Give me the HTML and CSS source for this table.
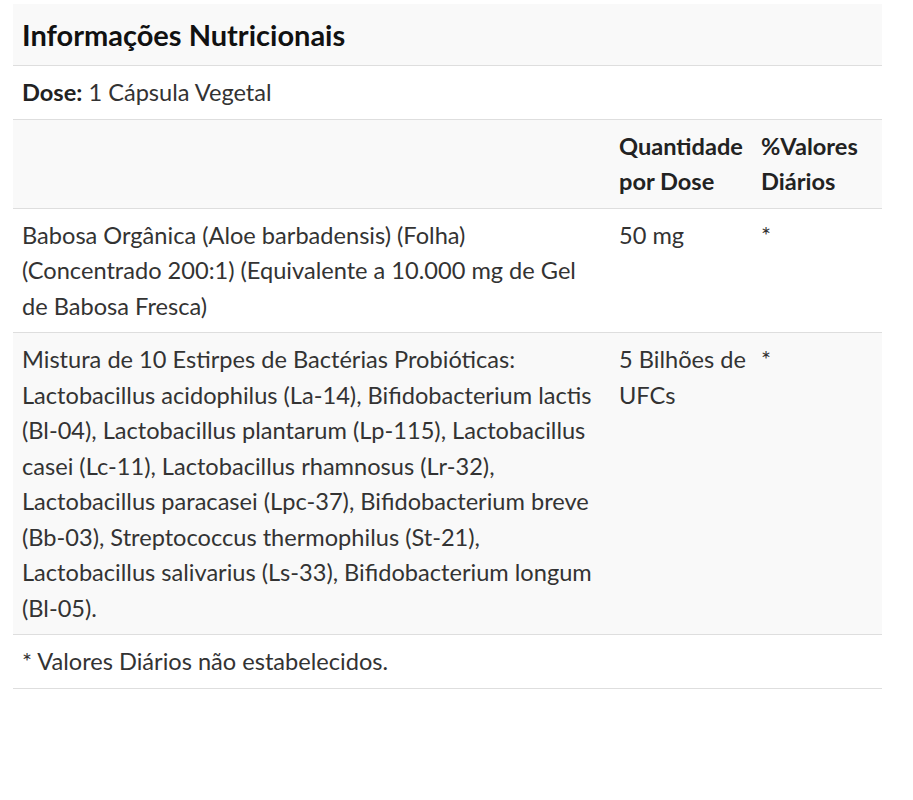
FILE: index.html
```html
<!DOCTYPE html>
<html lang="pt">
<head>
<meta charset="utf-8">
<link rel="stylesheet" href="styles.css">
</head>
<body>
<div class="panel">
  <table class="facts">
    <colgroup>
      <col class="c1">
      <col class="c2">
      <col class="c3">
    </colgroup>
    <thead>
      <tr class="title-row"><th colspan="3" class="title">Informações Nutricionais</th></tr>
      <tr class="dose-row"><td colspan="3"><strong>Dose:</strong> 1 Cápsula Vegetal</td></tr>
      <tr class="head-row shaded">
        <th></th>
        <th class="amt">Quantidade por Dose</th>
        <th>%Valores Diários</th>
      </tr>
    </thead>
    <tbody>
      <tr>
        <td>Babosa Orgânica (Aloe barbadensis) (Folha) (Concentrado 200:1) (Equivalente a 10.000 mg de Gel de Babosa Fresca)</td>
        <td class="amt">50 mg</td>
        <td>*</td>
      </tr>
      <tr class="shaded">
        <td>Mistura de 10 Estirpes de Bactérias Probióticas: Lactobacillus acidophilus (La-14), Bifidobacterium lactis (Bl-04), Lactobacillus plantarum (Lp-115), Lactobacillus casei (Lc-11), Lactobacillus rhamnosus (Lr-32), Lactobacillus paracasei (Lpc-37), Bifidobacterium breve (Bb-03), Streptococcus thermophilus (St-21), Lactobacillus salivarius (Ls-33), Bifidobacterium longum (Bl-05).</td>
        <td class="amt">5 Bilhões de UFCs</td>
        <td>*</td>
      </tr>
      <tr class="foot-row">
        <td colspan="3">* Valores Diários não estabelecidos.</td>
      </tr>
    </tbody>
  </table>
</div>
</body>
</html>
```
FILE: styles.css
```css
html, body {
  margin: 0;
  padding: 0;
  background: #ffffff;
}
body {
  font-family: Lato, "Open Sans", sans-serif;
  color: #333333;
}
.panel {
  padding: 4px 0 0 13px;
}
.facts {
  width: 869px;
  border-collapse: collapse;
  table-layout: fixed;
  font-size: 23.6px;
  line-height: 35.5px;
}
.facts th, .facts td {
  text-align: left;
  vertical-align: top;
  padding: 9px 9px 8px 9px;
  border-bottom: 1px solid #dedede;
}
.facts th {
  font-weight: 700;
  color: #222222;
}
.facts .amt {
  padding-right: 4px;
}
.title-row .title {
  background: #f9f9f9;
  font-size: 29px;
  line-height: 42px;
  color: #111111;
  padding: 10px 9px 9px 9px;
}
.shaded td, .shaded th {
  background: #f9f9f9;
}
.dose-row strong {
  font-weight: 700;
  color: #222222;
}
.c1 { width: 597px; }
.c2 { width: 142px; }
.c3 { width: 130px; }
```
